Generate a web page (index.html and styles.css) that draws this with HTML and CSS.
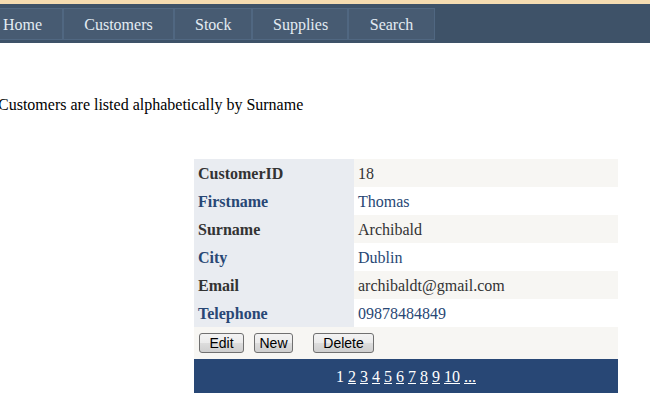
FILE: index.html
```html
<!DOCTYPE html>
<html>
<head>
<meta charset="utf-8">
<link rel="stylesheet" href="styles.css">
</head>
<body>
<div class="stripe"></div>
<nav class="nav">
  <ul class="menu">
    <li class="item item-home">Home</li>
    <li class="item item-customers">Customers</li>
    <li class="item item-stock">Stock</li>
    <li class="item item-supplies">Supplies</li>
    <li class="item item-search">Search</li>
  </ul>
</nav>
<p class="intro">Customers are listed alphabetically by Surname</p>
<table class="details">
  <tr class="row"><th>CustomerID</th><td>18</td></tr>
  <tr class="row alt"><th>Firstname</th><td>Thomas</td></tr>
  <tr class="row"><th>Surname</th><td>Archibald</td></tr>
  <tr class="row alt"><th>City</th><td>Dublin</td></tr>
  <tr class="row"><th>Email</th><td>archibaldt@gmail.com</td></tr>
  <tr class="row alt"><th>Telephone</th><td>09878484849</td></tr>
  <tr class="command"><td colspan="2"><button class="btn btn-edit">Edit</button><button class="btn btn-new">New</button><button class="btn btn-delete">Delete</button></td></tr>
  <tr class="pager"><td colspan="2">1 <a href="#">2</a> <a href="#">3</a> <a href="#">4</a> <a href="#">5</a> <a href="#">6</a> <a href="#">7</a> <a href="#">8</a> <a href="#">9</a> <a href="#">10</a> <a href="#">...</a></td></tr>
</table>
</body>
</html>
```
FILE: styles.css
```css
html, body {
  margin: 0;
  padding: 0;
  background: #ffffff;
  font-family: "Liberation Serif", "Times New Roman", serif;
  font-size: 16px;
  overflow: hidden;
}
.stripe {
  height: 4px;
  background: #f5dcb1;
}
.nav {
  height: 39px;
  background: #3e5268;
}
.menu {
  list-style: none;
  margin: 0 0 0 -18px;
  padding: 4px 0 0 0;
  display: flex;
}
.item {
  box-sizing: border-box;
  height: 32px;
  line-height: 30px;
  padding: 1px 20px 0 20px;
  background: #475b72;
  border: 1px solid #506781;
  color: #e3ebf3;
  text-align: center;
}
.item-home { width: 81px; }
.item-customers { width: 111px; }
.item-stock { width: 78px; }
.item-supplies { width: 96px; }
.item-search { width: 87px; }
.intro {
  margin: 53px 0 0 -2px;
  line-height: 18px;
  color: #000000;
}
.details {
  border-collapse: collapse;
  margin: 45px 0 0 194px;
  width: 424px;
}
.details th, .details td {
  padding: 2px 4px 0 4px;
  height: 26px;
  line-height: 18px;
  text-align: left;
  vertical-align: middle;
}
.details th {
  width: 152px;
  background: #e9ecf1;
  font-weight: bold;
}
.row { color: #333333; }
.row td { background: #f7f6f3; }
.row.alt { color: #284775; }
.row.alt td { background: #ffffff; }
.details .command td {
  background: #f7f6f3;
  height: 32px;
  padding: 0 5px;
}
.btn {
  box-sizing: border-box;
  height: 20px;
  padding: 0;
  font-family: "Liberation Sans", Arial, sans-serif;
  font-size: 14px;
  line-height: 16px;
  color: #000000;
  border: 1px solid #707070;
  border-radius: 3px;
  background: linear-gradient(#f3f3f3 0%, #ebebeb 50%, #dddddd 51%, #cfcfcf 100%);
  vertical-align: middle;
}
.btn-edit { width: 45px; }
.btn-new { width: 39px; margin-left: 10px; }
.btn-delete { width: 61px; margin-left: 20px; }
.details .pager td {
  background: #284775;
  color: #ffffff;
  height: 32px;
  padding: 2px 4px 0 4px;
  text-align: center;
}
.pager a {
  color: #ffffff;
  text-decoration: underline;
}
```
